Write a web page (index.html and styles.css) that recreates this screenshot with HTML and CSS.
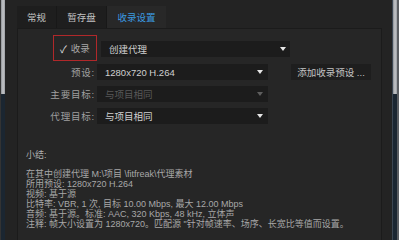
FILE: index.html
```html
<!DOCTYPE html>
<html lang="zh">
<head>
    <meta charset="utf-8">
    <title>收录设置</title>
    <link rel="stylesheet" href="styles.css">
</head>
<body>
    <div class="vindue">
        <div class="rulle venstre"><div class="greb"></div></div>

        <div class="indhold">
            <nav class="faner">
                <div class="fane">常规</div>
                <div class="fane">暂存盘</div>
                <div class="fane valgt">收录设置</div>
            </nav>

            <section class="panel">
                <div class="tjek-raekke">
                    <label class="tjek"><span class="flueben">✓</span>收录</label>
                    <div class="vaelger bred"><span>创建代理</span><i class="pil"></i></div>
                </div>

                <div class="formular">
                    <span class="etiket">预设:</span>
                    <div class="vaelger"><span>1280x720 H.264</span><i class="pil"></i></div>
                    <button class="knap">添加收录预设 ...</button>

                    <span class="etiket">主要目标:</span>
                    <div class="vaelger slukket"><span>与项目相同</span><i class="pil"></i></div>
                    <span></span>

                    <span class="etiket">代理目标:</span>
                    <div class="vaelger"><span>与项目相同</span><i class="pil"></i></div>
                    <span></span>
                </div>

                <p class="overskrift">小结:</p>
                <div class="resume">
                    <p>在其中创建代理 M:\项目 \fitfreak\代理素材</p>
                    <p>所用预设: 1280x720 H.264</p>
                    <p>视频: 基于源</p>
                    <p>比特率: VBR, 1 次, 目标 10.00 Mbps, 最大 12.00 Mbps</p>
                    <p>音频: 基于源。标准: AAC, 320 Kbps, 48 kHz, 立体声</p>
                    <p>注释: 帧大小设置为 1280x720。匹配源 "针对帧速率、场序、长宽比等值而设置。</p>
                </div>
            </section>
        </div>

        <div class="rulle hoejre"><div class="greb"></div></div>
        <div class="kant"></div>
    </div>
</body>
</html>
```

FILE: styles.css
```css
html, body {
    margin: 0;
    height: 100%;
}

body {
    background-color: #232323;
    font-family: "Liberation Sans", "Noto Sans CJK SC", sans-serif;
    font-size: 9.5px;
    color: #a8a8a8;
    overflow: hidden;
}

p {
    margin: 0;
}

.vindue {
    display: flex;
    height: 240px;
}

/* rullebjaelker i kanterne */
.rulle {
    width: 4px;
    background-color: #1b2631;
    border-left: 1px solid #3b4652;
}

.rulle .greb {
    height: 94px;
    background: linear-gradient(to right, #8e9196, #c4c6c9, #9a9da2);
}

.venstre {
    border-left: 1px solid #333;
}

.hoejre {
    margin-left: 10px;
}

.kant {
    width: 2px;
    background-color: #5a5d61;
}

.indhold {
    width: 365px;
    margin-left: 12px;
    display: flex;
    flex-direction: column;
}

/* faner */
.faner {
    display: flex;
    margin-top: 6px;
    height: 22px;
}

.fane {
    background-color: #1e1e1e;
    color: #c2c2c2;
    display: flex;
    align-items: center;
    justify-content: center;
    border-right: 1px solid #181818;
}

.fane:nth-child(1) {
    width: 39px;
}

.fane:nth-child(2) {
    width: 49px;
}

.fane.valgt {
    width: 59px;
    background-color: #282828;
    color: #3b9ae0;
    border-right: none;
}

.panel {
    flex: 1;
    background-color: #262626;
    border: 1px solid #1b1b1b;
    border-bottom: none;
    padding-top: 6px;
}

.tjek-raekke {
    display: flex;
    align-items: center;
    margin-left: 35px;
}

.tjek {
    box-sizing: border-box;
    width: 44px;
    height: 26px;
    border: 1px solid #b0282a;
    display: flex;
    align-items: center;
    padding-left: 6px;
    color: #a8a8a8;
}

.flueben {
    color: #e8e8e8;
    font-size: 10px;
    margin-right: 4px;
}

.vaelger {
    height: 16px;
    background-color: #1c1c1c;
    display: flex;
    align-items: center;
    justify-content: space-between;
    padding: 0 5px 0 8px;
    color: #d0d0d0;
    box-sizing: border-box;
}

.vaelger.bred {
    width: 189px;
    margin-left: 4px;
    margin-top: 2px;
    padding-right: 4px;
}

.pil {
    width: 0;
    height: 0;
    border-left: 3.5px solid transparent;
    border-right: 3.5px solid transparent;
    border-top: 4px solid #e6e6e6;
}

.slukket {
    color: #585858;
}

.slukket .pil {
    border-top-color: #5e5e5e;
}

.formular {
    display: grid;
    grid-template-columns: 77px 171px 80px;
    column-gap: 2px;
    row-gap: 6px;
    grid-auto-rows: 16px;
    margin-top: 3px;
}

.formular .vaelger {
    width: 171px;
}

.etiket {
    text-align: right;
    align-self: center;
    color: #a0a0a0;
    letter-spacing: 0.8px;
}

.knap {
    margin-left: 21px;
    width: 80px;
    height: 16px;
    padding: 0;
    border: none;
    background-color: #1e1e1e;
    color: #c4c4c4;
    font: inherit;
}

.overskrift {
    margin-top: 26px;
    margin-left: 8px;
    line-height: 10px;
    font-size: 9px;
    color: #b0b0b0;
}

.resume {
    margin-top: 9px;
    margin-left: 8px;
    font-size: 9px;
    line-height: 10px;
    color: #a8a8a8;
}
```
